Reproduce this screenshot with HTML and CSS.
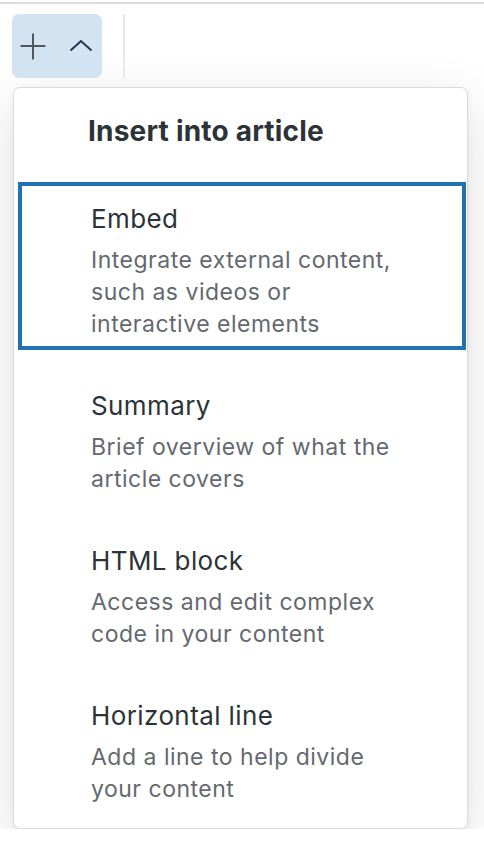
FILE: index.html
```html
<!DOCTYPE html>
<html lang="en">
<head>
    <meta charset="UTF-8">
    <meta name="viewport" content="width=device-width, initial-scale=1.0">
    <title>Insert into article</title>
    <link rel="stylesheet" href="styles.css">
</head>
<body>
    <div class="toolbar">
        <div class="btn-group">
            <button class="tool-btn" aria-label="Add block">
                <svg width="28" height="28" viewBox="0 0 28 28" fill="none" stroke="#50575e" stroke-width="2">
                    <path d="M1.5 14H26.5M14 1.5V27.5"/>
                </svg>
            </button>
            <button class="tool-btn chevron-btn" aria-label="Collapse">
                <svg width="24" height="24" viewBox="0 0 24 24" fill="none" stroke="#1d3550" stroke-width="2">
                    <path d="M1.5 16.5L12 7L22.5 16.5"/>
                </svg>
            </button>
        </div>
        <div class="separator"></div>
    </div>

    <div class="popover">
        <h2 class="popover-title">Insert into article</h2>
        <ul class="insert-list">
            <li class="insert-item is-focused">
                <span class="item-title">Embed</span>
                <span class="item-desc">Integrate external content, such as videos or interactive elements</span>
            </li>
            <li class="insert-item">
                <span class="item-title">Summary</span>
                <span class="item-desc">Brief overview of what the article covers</span>
            </li>
            <li class="insert-item">
                <span class="item-title">HTML block</span>
                <span class="item-desc">Access and edit complex code in your content</span>
            </li>
            <li class="insert-item">
                <span class="item-title">Horizontal line</span>
                <span class="item-desc">Add a line to help divide your content</span>
            </li>
        </ul>
    </div>
</body>
</html>
```

FILE: styles.css
```css
body {
    margin: 0;
    background: #fff;
    font-family: Inter, "Noto Sans", sans-serif;
}
.toolbar {
    display: flex;
    align-items: stretch;
    margin-top: 2px;
    padding: 10px 12px 0;
    border-top: 2px solid #dcdcde;
}
.btn-group {
    display: flex;
    align-items: center;
    gap: 22px;
    height: 64px;
    padding: 0 9px 0 7px;
    background: #d3e3f2;
    border-radius: 7px;
}
.tool-btn {
    display: flex;
    padding: 0;
    border: none;
    background: none;
    cursor: pointer;
}
.separator {
    width: 2px;
    margin-left: 21px;
    background: #e8e8e8;
}
.popover {
    width: 448px;
    margin: 9px 0 0 13px;
    padding: 26px 1px 13px 4px;
    background: white;
    border: 1px solid #dcdcde;
    border-radius: 7px;
    box-shadow: 0 14px 50px rgba(0, 0, 0, 0.13), 0 2px 6px rgba(0, 0, 0, 0.05);
}
.popover-title {
    margin: 0 0 34px 70px;
    font-size: 28px;
    line-height: 34px;
    font-weight: 700;
    letter-spacing: 0.2px;
    color: #2c3338;
}
.insert-list {
    margin: 0;
    padding: 0;
    list-style: none;
}
.insert-item {
    display: flex;
    flex-direction: column;
    gap: 8px;
    margin-bottom: 19px;
    padding: 16px 57px 6px 69px;
    border: 4px solid transparent;
    cursor: pointer;
}
.insert-item:last-child {
    margin-bottom: 0;
}
.insert-item.is-focused {
    border-color: #2271b1;
}
.item-title {
    font-size: 26px;
    line-height: 34px;
    letter-spacing: 0.4px;
    color: #2c3338;
}
.item-desc {
    font-size: 23px;
    line-height: 32px;
    letter-spacing: 0.5px;
    color: #646970;
}
```
